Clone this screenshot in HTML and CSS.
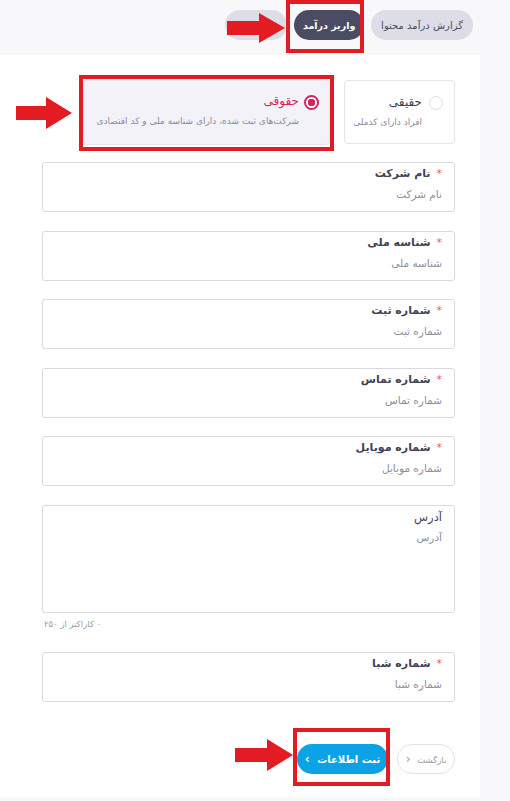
FILE: index.html
```html
<!DOCTYPE html>
<html lang="fa" dir="rtl">
<head>
    <meta charset="UTF-8">
    <meta name="viewport" content="width=device-width, initial-scale=1.0">
    <title>واریز درآمد</title>
    <link rel="stylesheet" href="styles.css">
</head>
<body>
    <div class="tabs">
        <button class="tab">گزارش درآمد محتوا</button>
        <button class="tab active">واریز درآمد</button>
        <button class="tab blank">تسویه</button>
    </div>

    <div class="card">
        <div class="type-row">
            <label class="type-option">
                <span class="radio"></span>
                <span class="type-text">
                    <span class="type-title">حقیقی</span>
                    <span class="type-desc">افراد دارای کدملی</span>
                </span>
            </label>
            <label class="type-option selected">
                <span class="radio"></span>
                <span class="type-text">
                    <span class="type-title">حقوقی</span>
                    <span class="type-desc">شرکت‌های ثبت شده، دارای شناسه ملی و کد اقتصادی</span>
                </span>
            </label>
        </div>

        <div class="fields">
            <div class="field">
                <div class="field-label"><span class="req">*</span>نام شرکت</div>
                <div class="field-input">نام شرکت</div>
            </div>
            <div class="field">
                <div class="field-label"><span class="req">*</span>شناسه ملی</div>
                <div class="field-input">شناسه ملی</div>
            </div>
            <div class="field">
                <div class="field-label"><span class="req">*</span>شماره ثبت</div>
                <div class="field-input">شماره ثبت</div>
            </div>
            <div class="field">
                <div class="field-label"><span class="req">*</span>شماره تماس</div>
                <div class="field-input">شماره تماس</div>
            </div>
            <div class="field">
                <div class="field-label"><span class="req">*</span>شماره موبایل</div>
                <div class="field-input">شماره موبایل</div>
            </div>
            <div class="field-group">
                <div class="field textarea">
                    <div class="field-label plain">آدرس</div>
                    <div class="field-input">آدرس</div>
                </div>
                <div class="counter">۰ کاراکتر از ۲۵۰</div>
            </div>
            <div class="field sheba">
                <div class="field-label"><span class="req">*</span>شماره شبا</div>
                <div class="field-input">شماره شبا</div>
            </div>
        </div>

        <div class="actions">
            <button class="btn-back">بازگشت <span class="chev">‹</span></button>
            <button class="btn-submit">ثبت اطلاعات <span class="chev">›</span></button>
        </div>
    </div>

    <!-- annotations drawn over the screenshot -->
    <div class="mark mark-tab"></div>
    <div class="mark mark-type"></div>
    <div class="mark mark-submit"></div>

    <svg class="arrow arrow-tab" viewBox="0 0 58 30"><polygon points="0,8 32,8 32,0 58,15 32,30 32,22 0,22"/></svg>
    <svg class="arrow arrow-type" viewBox="0 0 56 32"><polygon points="0,9 30,9 30,0 56,16 30,32 30,23 0,23"/></svg>
    <svg class="arrow arrow-submit" viewBox="0 0 58 32"><polygon points="0,9 32,9 32,0 58,16 32,32 32,23 0,23"/></svg>
</body>
</html>
```

FILE: styles.css
```css
body {
    margin: 0;
    background: #f8f8fb;
    font-family: "DejaVu Sans", sans-serif;
    color: #3f4254;
    position: relative;
    min-height: 801px;
}
button {
    font-family: inherit;
    border: none;
    cursor: pointer;
    white-space: nowrap;
}
.tabs {
    display: flex;
    gap: 7px;
    padding: 10px 37px 0 0;
    height: 45px;
}
.tab {
    height: 30px;
    padding: 0 10px;
    border-radius: 15px;
    background: #dcdde6;
    color: #4b4d5e;
    font-size: 10px;
}
.tab.active {
    background: #4b4c64;
    color: #fff;
    width: 70px;
    padding: 0;
    font-size: 9.5px;
    font-weight: bold;
}
.tab.blank {
    width: 62px;
    color: transparent;
}
.card {
    width: 480px;
    margin-left: 0;
    margin-right: auto;
    background: #fff;
    height: 742px;
    box-sizing: border-box;
    padding-top: 25px;
}
.type-row {
    display: flex;
    gap: 14px;
    padding-right: 25px;
    height: 66px;
}
.type-option {
    display: flex;
    gap: 7px;
    border: 1px solid #e4e4ea;
    border-radius: 4px;
    padding: 14px 11px 0 8px;
    box-sizing: border-box;
    width: 111px;
    height: 64px;
}
.type-option.selected {
    width: 247px;
    height: 66px;
    margin-top: -1px;
    gap: 5px;
    padding-right: 10px;
    background: #f3f2f8;
    border-color: #e6e4ee;
}
.radio {
    width: 14px;
    height: 14px;
    margin-top: 1px;
    border-radius: 50%;
    border: 1px solid #dedee6;
    background: #fff;
    box-sizing: border-box;
    flex: none;
}
.selected .radio {
    width: 15px;
    height: 15px;
    border: 2px solid #d6245a;
    background: radial-gradient(circle, #d6245a 0 3.5px, #fff 4px);
}
.type-text {
    display: flex;
    flex-direction: column;
    gap: 7px;
}
.type-title {
    font-size: 12px;
    color: #3f4254;
    line-height: 15px;
}
.selected .type-title {
    color: #d6245a;
}
.type-desc {
    font-size: 9px;
    color: #8a8b99;
    white-space: nowrap;
}
.fields {
    display: flex;
    flex-direction: column;
    gap: 18.6px;
    padding: 0 25px 0 42px;
    margin-top: 16px;
}
.field {
    border: 1px solid #d9d9df;
    border-radius: 3px;
    height: 50px;
    box-sizing: border-box;
    padding: 3px 12px 0 12px;
}
.field-label {
    font-size: 11px;
    font-weight: bold;
    color: #3f4254;
    line-height: 16px;
}
.field-label.plain {
    font-weight: normal;
    font-size: 11.5px;
}
.req {
    color: #f0506e;
    margin-left: 6px;
    font-weight: normal;
}
.field-input {
    font-size: 10.5px;
    color: #8d8e9b;
    margin-top: 6px;
}
.field.textarea {
    height: 108px;
}
.counter {
    font-size: 8.5px;
    color: #9a9ba6;
    text-align: left;
    margin-top: 6px;
    padding-left: 2px;
}
.field.sheba {
    margin-top: 4px;
}
.actions {
    display: flex;
    gap: 9px;
    padding-right: 25px;
    margin-top: 42px;
}
.btn-back {
    height: 30px;
    padding: 0;
    border-radius: 15px;
    background: #fff;
    border: 1px solid #e2e2e8;
    color: #9a9ba6;
    font-size: 8.5px;
    width: 58px;
}
.btn-submit {
    height: 30px;
    width: 91px;
    padding: 0;
    border-radius: 15px;
    background: #0ca3e6;
    color: #fff;
    font-size: 10px;
    font-weight: bold;
}
.chev {
    margin-right: 4px;
    font-size: 12px;
}
.mark {
    position: absolute;
    border: 4px solid #e11c24;
    box-sizing: border-box;
}
.mark-tab {
    left: 286px;
    top: 0;
    width: 78px;
    height: 53px;
}
.mark-type {
    left: 79px;
    top: 75px;
    width: 255px;
    height: 76px;
}
.mark-submit {
    left: 293px;
    top: 728px;
    width: 97px;
    height: 58px;
}
.arrow {
    position: absolute;
    fill: #e31b23;
}
.arrow-tab {
    left: 227px;
    top: 13px;
    width: 58px;
    height: 30px;
}
.arrow-type {
    left: 16px;
    top: 97px;
    width: 56px;
    height: 32px;
}
.arrow-submit {
    left: 235px;
    top: 739px;
    width: 58px;
    height: 32px;
}
```
